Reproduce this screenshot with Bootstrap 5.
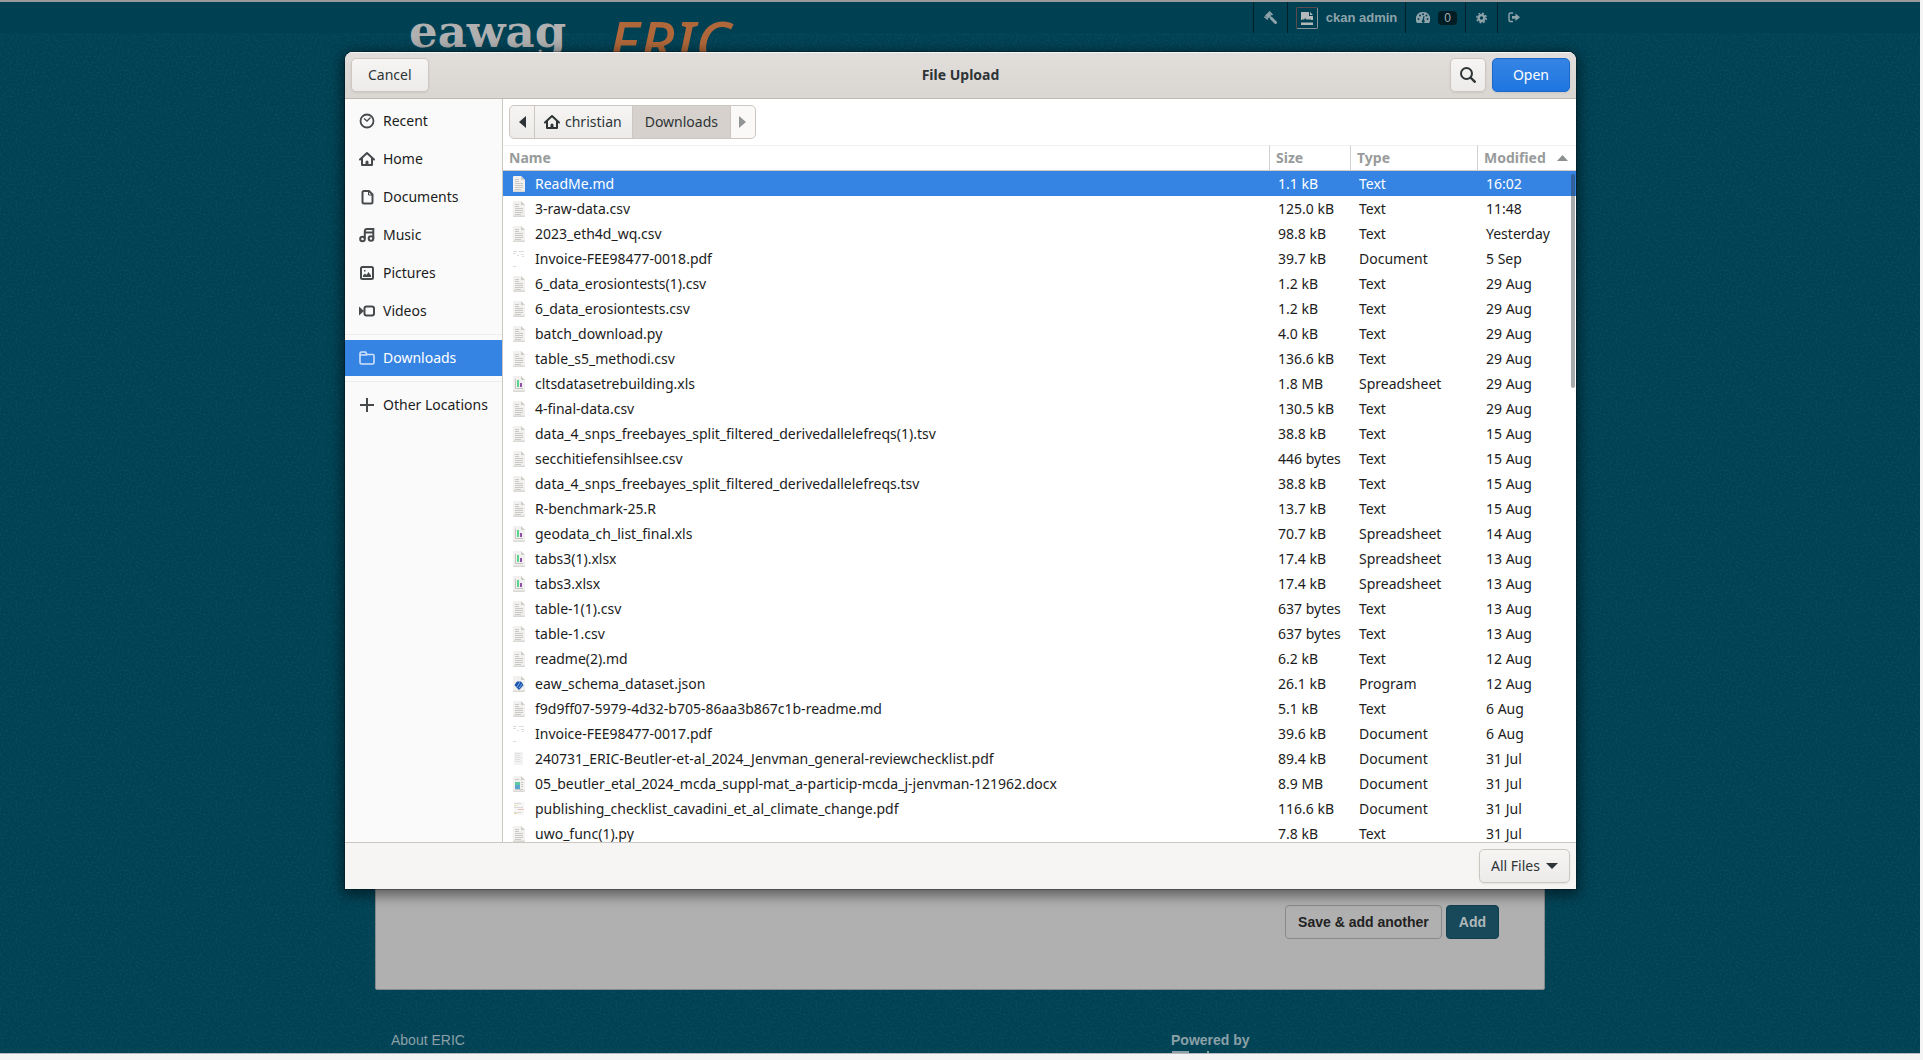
<!DOCTYPE html>
<html lang="en">
<head>
<meta charset="utf-8">
<meta name="viewport" content="width=device-width, initial-scale=1">
<title>File Upload</title>
<link href="https://cdn.jsdelivr.net/npm/bootstrap@5.3.0/dist/css/bootstrap.min.css" rel="stylesheet">
<style>
  html, body { height: 100%; }
  body { padding: 0 3px 6px 0; overflow: hidden; background: #f4f4f4; font-family: "Liberation Sans", Arial, sans-serif; font-size: 14px; line-height: 20px; }
  .site { height: 100%; border-top: 2px solid #9b9b9b; border-bottom: 1px solid #b9b9b9; overflow: hidden;
    background: #004154 url("data:image/svg+xml,%3Csvg xmlns='http://www.w3.org/2000/svg' width='100' height='100'%3E%3Cfilter id='n'%3E%3CfeTurbulence type='fractalNoise' baseFrequency='.5' numOctaves='2' stitchTiles='stitch'/%3E%3CfeColorMatrix values='0 0 0 0 .1 0 0 0 0 .45 0 0 0 0 .5 1.2 0 0 0 -.5'/%3E%3C/filter%3E%3Crect width='100' height='100' filter='url(%23n)' opacity='.2'/%3E%3C/svg%3E"); }
  .masthead { height: 66px; background: linear-gradient(#004053, #004053) 0 0 / 100% 31px no-repeat; }
  .site-width { width: 100%; max-width: 1170px; }
  .site-inner { padding: 0 15px; }
  .brand-eawag { font: bold 45px/60px "DejaVu Serif", serif; color: #b0b0b0; padding-left: 19px; }
  .brand-eric { font: italic 500 60px/80px "Noto Sans", sans-serif; color: #b0683a; padding-left: 42px; }
  .brand-eawag, .brand-eric { height: 64px; text-decoration: none; }
  .account a { height: 31px; padding: 0 10px; border-left: 1px solid #00202a; color: #8ea3aa; font-weight: bold; font-size: 13px; text-decoration: none; }
  .account .count { background: #001c24; color: #a4b0b4; border-radius: 4px; font: 12px/14px "Liberation Sans", sans-serif; padding: 0 6px; }
  .avatar { width: 22px; height: 22px; border: 1px solid #8a9499; border-top-color: #5a4a4c; border-left-color: #5a4a4c; border-radius: 2px; }
  .panel { background: #b0b0b0; border: 1px solid #858b8d; border-radius: 2px; padding: 0 45px 50px; }
  .form-btn { height: 34px; padding: 0 12px; font-weight: bold; font-size: 14px; line-height: 20px; border-radius: 4px; }
  .form-btn.another { color: #222; border-color: #8a8a8a; background: #b0b0b0; }
  .form-btn.add { color: #b0b8ba; background: #18495a; border-color: #123f4f; }
  .site-footer { height: 63px; padding-top: 40px; color: #8ba0a7; }
  .site-footer a { color: inherit; text-decoration: none; }

  .dialog { position: absolute; top: 52px; bottom: 171px; left: 345px; right: 347px; background: #fff; border-radius: 8px 8px 0 0; overflow: hidden; box-shadow: 0 0 0 1px rgba(0,0,0,.25), 0 3px 14px 3px rgba(0,0,0,.5); font-family: "Noto Sans", sans-serif; color: #1c1c1c; }
  .dlg-head { height: 47px; padding: 0 6px; background: linear-gradient(#e1dedb, #dad6d2); border-bottom: 1px solid #bfb8b1; box-shadow: inset 0 1px #f6f5f4; color: #2e3436; }
  .dlg-side { flex: 1 1 0; }
  .gtk { height: 34px; padding: 0 16px; border: 1px solid #cdc7c2; border-radius: 5px; background: linear-gradient(#f6f5f4, #edebe9); color: #2e3436; font-family: inherit; font-size: 14px; line-height: 20px; box-shadow: 0 1px 2px rgba(0,0,0,.08); }
  .gtk.square { width: 36px; padding: 0; margin-right: 6px; }
  .gtk.open { padding: 0 20px; color: #fff; border-color: #1b6acb; background: linear-gradient(#3584e4, #1f76e1); }
  .places { width: 158px; flex: none; background: #fafafa; border-right: 1px solid #cdc7c2; padding-top: 4px; }
  .places a { height: 36px; margin-bottom: 2px; padding-left: 14px; gap: 8px; color: #1c1c1c; text-decoration: none; white-space: nowrap; }
  .places a svg { color: #464a4c; }
  .places a.active { background: #3584e4; color: #fff; margin-bottom: 0; }
  .places a.active svg { color: #cfe2f9; }
  .places hr { margin: 5px 0; border-color: #c8c8c8; }
  .pathbar { padding: 6px; height: 46px; }
  .pathbar .gtk { box-shadow: none; padding: 0 12px; }
  .pathbar .gtk.home { padding: 0 10px 0 8px; }
  .pathbar .gtk.arrow { width: 26px; padding: 0; }
  .pathbar .gtk.here { background: #d6d1cd; }
  .pathbar .gtk.off { background: #faf9f8; color: #929595; border-color: #cdc7c2; opacity: 1; }
  .files { width: 100%; table-layout: fixed; border-collapse: separate; border-spacing: 0; }
  .files th { height: 26px; padding: 0 6px; color: #989b9b; font-weight: 700; border-top: 1px solid #f1f0ef; border-bottom: 1px solid #d0cbc6; border-left: 1px solid #d5d0cc; line-height: 20px; }
  .files th:first-child { border-left: 0; }
  .files td { height: 25px; padding: 0 0 0 9px; line-height: 20px; white-space: nowrap; }
  .files td:first-child { padding-left: 10px; }
  .files svg { margin-right: 10px; display: inline-block; vertical-align: -3px; }
  .files tr.picked td { background: #3584e4; color: #fff; }
  .files .sort { margin-right: 2px; }
  .col-size { width: 81px; } .col-type { width: 127px; } .col-mod { width: 99px; }
  .thumb { position: absolute; right: 1px; top: 75px; width: 4px; height: 214px; border-radius: 2px; background: rgba(46,52,54,.42); }
  .dlg-foot { height: 47px; padding: 0 6px; background: #f6f5f4; border-top: 1px solid #cdc7c2; }
  .dlg-foot select { width: 91px; padding: 0 11px; appearance: none; background: url("data:image/svg+xml,%3Csvg xmlns='http://www.w3.org/2000/svg' width='12' height='6'%3E%3Cpath d='M0 0h12L6 6z' fill='%232e3436'/%3E%3C/svg%3E") 66px 13px no-repeat, linear-gradient(#f6f5f4, #edebe9); }
</style>
<script src="https://cdn.jsdelivr.net/npm/bootstrap@5.3.0/dist/js/bootstrap.bundle.min.js"></script>
</head>
<body>
<svg class="d-none">
  <symbol id="f-text" viewBox="0 0 12 16"><path d="M1 0h7l4 4v11q0 1-1 1H1q-1 0-1-1V1q0-1 1-1z" fill="#f2f1ef"/><path d="M0 14.500h12v.5q0 1-1 1H1q-1 0-1-1z" fill="#dad8d4"/><path d="M8 0l4 4H8z" fill="#d0cec9"/><path d="M2 3.500h4M2 5.500h4M2 7.500h8M2 9.500h8M2 11.500h8M2 13.500h6" stroke="#cbc9c6"/></symbol>
  <symbol id="f-sheet" viewBox="0 0 12 16"><path d="M1 0h7l4 4v11q0 1-1 1H1q-1 0-1-1V1q0-1 1-1z" fill="#f2f1ef"/><path d="M0 14.500h12v.5q0 1-1 1H1q-1 0-1-1z" fill="#dad8d4"/><path d="M8 0l4 4H8z" fill="#d0cec9"/><path d="M2.500 3v9.500H10" fill="none" stroke="#c4c2be"/><path d="M4 4h2v7H4z" fill="#57d58a"/><path d="M7 7h2v4H7z" fill="#9050a8"/></symbol>
  <symbol id="f-prog" viewBox="0 0 12 16"><path d="M1 0h7l4 4v11q0 1-1 1H1q-1 0-1-1V1q0-1 1-1z" fill="#f2f1ef"/><path d="M0 14.500h12v.5q0 1-1 1H1q-1 0-1-1z" fill="#dad8d4"/><path d="M8 0l4 4H8z" fill="#d0cec9"/><path d="M4 6h4l2 3.200L6 13.500 2 9.200z" fill="#1c54a8" stroke="#1c54a8" stroke-linejoin="round"/><path d="M4 11l3-5M6 12l3-4" stroke="#79aef0"/></symbol>
  <symbol id="f-doc" viewBox="0 0 12 16"><path d="M1 0h7l4 4v11q0 1-1 1H1q-1 0-1-1V1q0-1 1-1z" fill="#f2f1ef"/><path d="M0 14.500h12v.5q0 1-1 1H1q-1 0-1-1z" fill="#dad8d4"/><path d="M8 0l4 4H8z" fill="#d0cec9"/><path d="M2 3.500h4M8 6.500h2M8 8.500h2M8 10.500h2M2 13.500h8" stroke="#cbc9c6"/><path d="M2 6h5v3H2z" fill="#5cc9a0"/><path d="M2 9h5v4H2z" fill="#5aa6cf"/></symbol>
  <symbol id="f-inv" viewBox="0 0 12 16"><path d="M0 .5h4M6 .5h5M0 2.500h3M4 4.500h2M8 3.500h3M9 5.500h2M0 15.500h3" stroke="#dcdcdc"/></symbol>
  <symbol id="f-page" viewBox="0 0 12 16"><path d="M1 1h9v13H1z" fill="#f3f3f3"/><path d="M2 2.500h6M2 4.500h5M2 6.500h6M2 8.500h5M2 10.500h6" stroke="#e0e0e0"/></symbol>
  <symbol id="f-check" viewBox="0 0 12 16"><path d="M1 1h10v13H1z" fill="#f6f6f6"/><path d="M1 2.500h7M1 6.500h9M1 11.500h8" stroke="#dadada"/><path d="M1 4.500h3M1 12.500h3" stroke="#efe2a0"/><path d="M5 8.500h6" stroke="#efc0b8"/></symbol>
  <symbol id="i-home" viewBox="0 0 16 16"><path d="M1 8.500L8 2l7 6.500" fill="none" stroke="currentColor" stroke-width="2" stroke-linecap="round" stroke-linejoin="round"/><path d="M3 7v7h10V7" fill="none" stroke="currentColor" stroke-width="2" stroke-linejoin="round"/><path d="M6.500 14v-3q0-1.500 1.500-1.500T9.500 11v3z" fill="currentColor"/></symbol>
</svg>

<div class="site d-flex flex-column">
  <header class="masthead flex-shrink-0">
    <div class="site-width site-inner mx-auto d-flex align-items-start">
      <a class="brand-eawag" href="#">eawag</a>
      <a class="brand-eric" href="#">ERIC</a>
      <nav class="account d-flex ms-auto" aria-label="Account">
        <a class="d-flex align-items-center" href="#" aria-label="Sysadmin"><svg width="13" height="13" viewBox="0 0 13 13" fill="none" stroke="currentColor"><path d="M2.500 6L6 2.500" stroke-width="4"/><path d="M.5 5.500l3.500 3M5 .5l3.500 3.500" stroke-width="1.600"/><path d="M5.500 5.500L8 7.500" stroke-width="1.800"/><path d="M7.500 7.500l4 4" stroke-width="3" stroke-linecap="round"/></svg></a>
        <a class="d-flex align-items-center gap-2 ps-1 pe-2" href="#"><span class="avatar d-block ms-1"><svg class="d-block" width="20" height="20" viewBox="0 0 20 20" fill="#b4b8b9"><path d="M4 4h8v4h4v4h-2l-1-1-1 1-1-1-1 1-2-2-1 2-1-1-1 1H4zM13 4l3 3h-3zM4 14l1 1 1-1 1 1 1-1 1 1 1-1 1 1 1-1 1 1 1-1 1 1 1-1v3H4z"/></svg></span>ckan admin</a>
        <a class="d-flex align-items-center gap-2 pe-2" href="#" aria-label="Dashboard"><svg width="14" height="12" viewBox="0 0 14 12"><path d="M7 0a7 7 0 0 1 6 11H1A7 7 0 0 1 7 0z" fill="currentColor"/><g fill="#004053"><circle cx="2.500" cy="7" r="1"/><circle cx="4" cy="3.500" r="1"/><circle cx="7" cy="2.200" r="1"/><circle cx="10.500" cy="3.500" r="1"/><circle cx="11.500" cy="7" r="1"/><path d="M7.500 4h1L8 8a1.500 1.500 0 1 1-1.500 0z"/></g></svg><span class="count">0</span></a>
        <a class="d-flex align-items-center" href="#" aria-label="Settings"><svg width="11" height="12" viewBox="0 0 12 12"><circle cx="6" cy="6" r="3.200" fill="none" stroke="currentColor" stroke-width="2.600"/><circle cx="6" cy="6" r="5.200" fill="none" stroke="currentColor" stroke-width="1.600" stroke-dasharray="2.100 1.980"/></svg></a>
        <a class="d-flex align-items-center" href="#" aria-label="Log out"><svg width="12" height="11" viewBox="0 0 12 11"><path d="M5 1H2.500Q1 1 1 2.500v5Q1 9.500 2.500 9.500H5" fill="none" stroke="currentColor" stroke-width="1.400"/><path d="M4 4h3.500V1.500L12 5.300 7.500 9V6.700H4z" fill="currentColor"/></svg></a>
      </nav>
    </div>
  </header>

  <main class="panel site-width mx-auto flex-grow-1 d-flex align-items-end justify-content-end gap-1">
    <button type="button" class="btn form-btn another">Save &amp; add another</button>
    <button type="button" class="btn form-btn add">Add</button>
  </main>

  <footer class="site-footer mx-auto site-width d-flex flex-shrink-0">
    <div class="col-8"><a class="ps-3" href="#">About ERIC</a></div>
    <div class="ps-3"><strong class="d-block">Powered by</strong><svg class="d-block" width="46" height="16" viewBox="0 0 46 16" fill="#8ba0a7"><path d="M1 1h17v5H1zM36 1h2v4h-2z"/></svg></div>
  </footer>
</div>

<div class="dialog d-flex flex-column" role="dialog" aria-labelledby="dlg-title">
  <div class="dlg-head d-flex align-items-center flex-shrink-0">
    <div class="dlg-side"><button type="button" class="gtk">Cancel</button></div>
    <div id="dlg-title" class="fw-bold">File Upload</div>
    <div class="dlg-side d-flex justify-content-end">
      <button type="button" class="gtk square" aria-label="Search"><svg class="d-block mx-auto" width="16" height="16" viewBox="0 0 16 16" fill="none" stroke="currentColor" stroke-width="2"><circle cx="6.500" cy="6.500" r="5.500"/><path d="M10.500 10.500l5 5" stroke-width="2.400"/></svg></button>
      <button type="button" class="gtk open">Open</button>
    </div>
  </div>

  <div class="d-flex flex-grow-1 overflow-hidden">
    <nav class="places" aria-label="Places">
      <a class="d-flex align-items-center" href="#"><svg width="16" height="16" viewBox="0 0 16 16" fill="none" stroke="currentColor" stroke-width="1.800"><circle cx="8" cy="8" r="6.500"/><path d="M5 5.500L8 8l3.500-3.500" stroke-width="1.300"/></svg>Recent</a>
      <a class="d-flex align-items-center" href="#"><svg width="16" height="16"><use href="#i-home"/></svg>Home</a>
      <a class="d-flex align-items-center" href="#"><svg width="16" height="16" viewBox="0 0 16 16" fill="none" stroke="currentColor" stroke-width="2" stroke-linejoin="round"><path d="M5 2h5l3.500 3.500V13q0 1.500-1.500 1.500H5Q3.500 14.500 3.500 13V3.500Q3.500 2 5 2z"/><path d="M9.500 2v4h4" stroke-width="1"/></svg>Documents</a>
      <a class="d-flex align-items-center" href="#"><svg width="16" height="16" viewBox="0 0 16 16" fill="none" stroke="currentColor" stroke-width="2"><circle cx="3.500" cy="12" r="2.300"/><circle cx="12" cy="11.500" r="2.300"/><path d="M5.800 12V4Q6 2 8 2h6.300v9.500M6 5.500h8"/></svg>Music</a>
      <a class="d-flex align-items-center" href="#"><svg width="16" height="16" viewBox="0 0 16 16"><rect x="2" y="2" width="12" height="12" rx="1.500" fill="none" stroke="currentColor" stroke-width="2"/><path d="M4 12V10.500l2-2 1.500 1.500 2-3L12 10.500V12zM5 5h1.500v1.500H5z" fill="currentColor"/></svg>Pictures</a>
      <a class="d-flex align-items-center" href="#"><svg width="16" height="16" viewBox="0 0 16 16"><rect x="5.500" y="3.500" width="9.500" height="9" rx="2" fill="none" stroke="currentColor" stroke-width="2"/><path d="M0 3.500l5 4.500-5 4.500z" fill="currentColor"/></svg>Videos</a>
      <hr>
      <a class="d-flex align-items-center active" href="#"><svg width="16" height="16" viewBox="0 0 16 16" fill="none" stroke="currentColor" stroke-width="1.600"><path d="M1 12.500V3.500Q1 2 2.500 2h4L8 4.500h6Q15 4.500 15 6v6.500Q15 14 13.500 14h-11Q1 14 1 12.500zM1 5h7"/></svg>Downloads</a>
      <hr>
      <a class="d-flex align-items-center" href="#"><svg width="16" height="16" viewBox="0 0 16 16" stroke="currentColor" stroke-width="2"><path d="M8 1v14M1 8h14"/></svg>Other Locations</a>
    </nav>

    <div class="flex-grow-1 position-relative">
      <div class="pathbar">
        <div class="btn-group" role="group" aria-label="Path">
          <button type="button" class="btn gtk arrow" aria-label="Back"><svg class="d-block mx-auto" width="7" height="12"><path d="M7 0v12L0 6z" fill="currentColor"/></svg></button>
          <button type="button" class="btn gtk home d-flex align-items-center gap-1"><svg width="18" height="16"><use href="#i-home"/></svg>christian</button>
          <button type="button" class="btn gtk here">Downloads</button>
          <button type="button" class="btn gtk arrow off" aria-label="Forward" disabled><svg class="d-block mx-auto" width="7" height="12"><path d="M0 0v12l7-6z" fill="currentColor"/></svg></button>
        </div>
      </div>
      <table class="files">
        <colgroup><col><col class="col-size"><col class="col-type"><col class="col-mod"></colgroup>
        <thead><tr><th>Name</th><th>Size</th><th>Type</th><th><span class="d-flex align-items-center">Modified<svg class="sort ms-auto" width="11" height="6"><path d="M0 6h11L5.500 0z" fill="#8d9090"/></svg></span></th></tr></thead>
        <tbody id="file-rows"></tbody>
      </table>
      <div class="thumb"></div>
    </div>
  </div>

  <div class="dlg-foot d-flex align-items-center justify-content-end flex-shrink-0">
    <select class="gtk" aria-label="File type filter"><option>All Files</option></select>
  </div>
</div>

<script>
const files = [
  ["text", "ReadMe.md", "1.1 kB", "Text", "16:02"],
  ["text", "3-raw-data.csv", "125.0 kB", "Text", "11:48"],
  ["text", "2023_eth4d_wq.csv", "98.8 kB", "Text", "Yesterday"],
  ["inv", "Invoice-FEE98477-0018.pdf", "39.7 kB", "Document", "5 Sep"],
  ["text", "6_data_erosiontests(1).csv", "1.2 kB", "Text", "29 Aug"],
  ["text", "6_data_erosiontests.csv", "1.2 kB", "Text", "29 Aug"],
  ["text", "batch_download.py", "4.0 kB", "Text", "29 Aug"],
  ["text", "table_s5_methodi.csv", "136.6 kB", "Text", "29 Aug"],
  ["sheet", "cltsdatasetrebuilding.xls", "1.8 MB", "Spreadsheet", "29 Aug"],
  ["text", "4-final-data.csv", "130.5 kB", "Text", "29 Aug"],
  ["text", "data_4_snps_freebayes_split_filtered_derivedallelefreqs(1).tsv", "38.8 kB", "Text", "15 Aug"],
  ["text", "secchitiefensihlsee.csv", "446 bytes", "Text", "15 Aug"],
  ["text", "data_4_snps_freebayes_split_filtered_derivedallelefreqs.tsv", "38.8 kB", "Text", "15 Aug"],
  ["text", "R-benchmark-25.R", "13.7 kB", "Text", "15 Aug"],
  ["sheet", "geodata_ch_list_final.xls", "70.7 kB", "Spreadsheet", "14 Aug"],
  ["sheet", "tabs3(1).xlsx", "17.4 kB", "Spreadsheet", "13 Aug"],
  ["sheet", "tabs3.xlsx", "17.4 kB", "Spreadsheet", "13 Aug"],
  ["text", "table-1(1).csv", "637 bytes", "Text", "13 Aug"],
  ["text", "table-1.csv", "637 bytes", "Text", "13 Aug"],
  ["text", "readme(2).md", "6.2 kB", "Text", "12 Aug"],
  ["prog", "eaw_schema_dataset.json", "26.1 kB", "Program", "12 Aug"],
  ["text", "f9d9ff07-5979-4d32-b705-86aa3b867c1b-readme.md", "5.1 kB", "Text", "6 Aug"],
  ["inv", "Invoice-FEE98477-0017.pdf", "39.6 kB", "Document", "6 Aug"],
  ["page", "240731_ERIC-Beutler-et-al_2024_Jenvman_general-reviewchecklist.pdf", "89.4 kB", "Document", "31 Jul"],
  ["doc", "05_beutler_etal_2024_mcda_suppl-mat_a-particip-mcda_j-jenvman-121962.docx", "8.9 MB", "Document", "31 Jul"],
  ["check", "publishing_checklist_cavadini_et_al_climate_change.pdf", "116.6 kB", "Document", "31 Jul"],
  ["text", "uwo_func(1).py", "7.8 kB", "Text", "31 Jul"]
];
document.getElementById("file-rows").innerHTML = files.map(([icon, name, size, type, date], i) =>
  `<tr${i ? "" : ' class="picked"'}><td><svg width="12" height="16"><use href="#f-${icon}"/></svg>${name}</td><td>${size}</td><td>${type}</td><td>${date}</td></tr>`).join("");
</script>
</body>
</html>
